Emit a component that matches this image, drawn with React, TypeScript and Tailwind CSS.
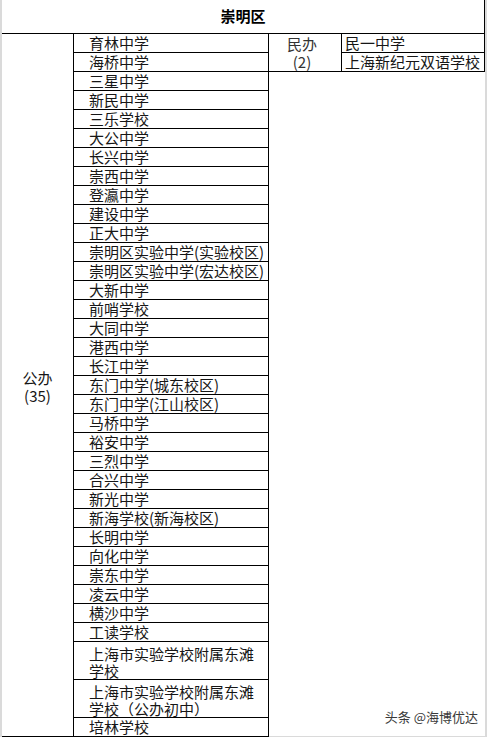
const publicSchools: string[] = [
  "育林中学",
  "海桥中学",
  "三星中学",
  "新民中学",
  "三乐学校",
  "大公中学",
  "长兴中学",
  "崇西中学",
  "登瀛中学",
  "建设中学",
  "正大中学",
  "崇明区实验中学(实验校区)",
  "崇明区实验中学(宏达校区)",
  "大新中学",
  "前哨学校",
  "大同中学",
  "港西中学",
  "长江中学",
  "东门中学(城东校区)",
  "东门中学(江山校区)",
  "马桥中学",
  "裕安中学",
  "三烈中学",
  "合兴中学",
  "新光中学",
  "新海学校(新海校区)",
  "长明中学",
  "向化中学",
  "崇东中学",
  "凌云中学",
  "横沙中学",
  "工读学校",
];

// two-line rows, broken the way the sheet wraps them
const longSchools: [string, string][] = [
  ["上海市实验学校附属东滩", "学校"],
  ["上海市实验学校附属东滩", "学校（公办初中）"],
];

const privateSchools = ["民一中学", "上海新纪元双语学校"];

export default function App() {
  return (
    <div className="relative w-[487px] h-[737px] overflow-hidden bg-white border-l-2 border-r-2 border-[#dadada] font-['Noto_Sans_CJK_SC',sans-serif] text-[15px] text-[#161616]">
      {/* title */}
      <div className="h-[34px] flex items-center justify-center border-b border-r border-black font-bold text-black">
        崇明区
      </div>

      <div className="flex h-[703px]">
        {/* 公办 label */}
        <div className="w-[72px] shrink-0 border-r border-b border-black flex items-center justify-center">
          <div className="text-center leading-[18px] pt-[4px]">
            公办
            <br />
            (35)
          </div>
        </div>

        {/* 公办 schools */}
        <div className="w-[195px] shrink-0 border-r border-black flex flex-col">
          {publicSchools.map((name) => (
            <div
              key={name}
              className="h-[19px] border-b border-black pl-[15px] leading-[18px] whitespace-nowrap"
            >
              {name}
            </div>
          ))}
          {longSchools.map(([a, b], i) => (
            <div
              key={i}
              className="h-[38px] border-b border-black pl-[15px] pt-[3px] leading-[17px] whitespace-nowrap"
            >
              {a}
              <br />
              {b}
            </div>
          ))}
          <div className="h-[19px] border-b border-black pl-[15px] leading-[18px]">
            培林学校
          </div>
        </div>

        {/* 民办 */}
        <div className="flex-1 border-b border-[#dadada]">
          <div className="flex h-[38px] border-b border-black">
            <div className="w-[73px] shrink-0 border-r border-black flex items-center justify-center">
              <div className="text-center leading-[18px] text-[#333] pr-[6px]">
                民办
                <br />
                (2)
              </div>
            </div>
            <div className="flex-1 border-r border-black flex flex-col">
              {privateSchools.map((name, i) => (
                <div
                  key={name}
                  className={
                    i === 0
                      ? "h-[19px] border-b border-black pl-[3px] leading-[18px] whitespace-nowrap"
                      : "h-[18px] pl-[3px] leading-[18px] whitespace-nowrap"
                  }
                >
                  {name}
                </div>
              ))}
            </div>
          </div>
        </div>
      </div>

      {/* watermark */}
      <div className="absolute right-[7px] top-[709px] text-[13px] leading-[16px] text-[#3a3a3a] [text-shadow:0_0_2px_#fff,0_0_2px_#fff]">
        头条 @海博优达
      </div>
    </div>
  );
}
